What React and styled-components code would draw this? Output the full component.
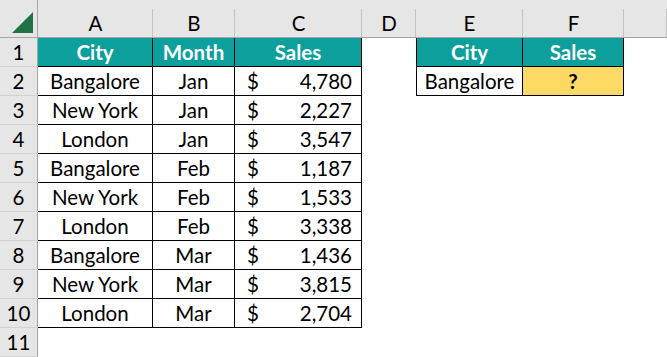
import React from 'react';
import styled, { createGlobalStyle, css } from 'styled-components';

const GlobalStyle = createGlobalStyle`
  html, body {
    margin: 0;
    padding: 0;
    background: #ffffff;
  }
  body {
    font-family: 'Lato', 'Liberation Sans', sans-serif;
    overflow: hidden;
  }
`;

// Styled Components
const Sheet = styled.div`
  display: grid;
  grid-template-columns: 38px 115px 82px 127px 54px 107px 101px 1fr;
  grid-template-rows: 38px repeat(11, 29px);
  width: 667px;
  height: 357px;
  background: #ffffff;
  color: #000000;
  font-size: 20.5px;
`;

const Corner = styled.div`
  background: #e6e6e6;
  border-right: 1px solid #a6a6a6;
  border-bottom: 1px solid #a6a6a6;
  display: flex;
  align-items: flex-end;
  justify-content: flex-end;
  padding: 0 4px 4px 0;
  box-sizing: border-box;
`;

const ColHeader = styled.div`
  position: relative;
  background: #e6e6e6;
  border-bottom: 1px solid #a6a6a6;
  box-sizing: border-box;
  display: flex;
  align-items: center;
  justify-content: center;
  padding-top: 9px;

  &::after {
    content: '';
    position: absolute;
    top: 9px;
    bottom: 0;
    right: 0;
    width: 1px;
    background: #c4c4c4;
  }
`;

const RowHeader = styled.div`
  background: #e6e6e6;
  border-right: 1px solid #a6a6a6;
  border-bottom: 1px solid #d2d2d2;
  box-sizing: border-box;
  display: flex;
  align-items: center;
  justify-content: center;
`;

const Cell = styled.div`
  box-sizing: border-box;
  display: flex;
  align-items: center;
  justify-content: center;
  white-space: nowrap;
  padding-bottom: 1px;

  ${props => props.boxed && css`
    border-right: 1px solid #000000;
    border-bottom: 1px solid #000000;
  `}
  ${props => props.leftEdge && css`
    border-left: 1px solid #000000;
  `}
  ${props => props.variant === 'head' && css`
    background: #0d9f9c;
    color: #ffffff;
    font-weight: 700;
  `}
  ${props => props.variant === 'input' && css`
    background: #ffd966;
    font-weight: 700;
  `}
`;

const MoneyCell = styled(Cell)`
  justify-content: space-between;
  padding: 0 9px 1px 12px;
`;

// Data
const columns = ['A', 'B', 'C', 'D', 'E', 'F', ''];

const sales = [
  { city: 'Bangalore', month: 'Jan', amount: '4,780' },
  { city: 'New York', month: 'Jan', amount: '2,227' },
  { city: 'London', month: 'Jan', amount: '3,547' },
  { city: 'Bangalore', month: 'Feb', amount: '1,187' },
  { city: 'New York', month: 'Feb', amount: '1,533' },
  { city: 'London', month: 'Feb', amount: '3,338' },
  { city: 'Bangalore', month: 'Mar', amount: '1,436' },
  { city: 'New York', month: 'Mar', amount: '3,815' },
  { city: 'London', month: 'Mar', amount: '2,704' },
];

function SelectAll() {
  return (
    <svg width="21" height="21" viewBox="0 0 21 21">
      <polygon points="21,0 21,21 0,21" fill="#217346" />
    </svg>
  );
}

function LookupCells({ row }) {
  if (row === 1) {
    return (
      <>
        <Cell boxed leftEdge variant="head">City</Cell>
        <Cell boxed variant="head">Sales</Cell>
      </>
    );
  }
  if (row === 2) {
    return (
      <>
        <Cell boxed leftEdge>Bangalore</Cell>
        <Cell boxed variant="input">?</Cell>
      </>
    );
  }
  return (
    <>
      <Cell />
      <Cell />
    </>
  );
}

export default function App() {
  return (
    <>
      <GlobalStyle />
      <Sheet>
        <Corner>
          <SelectAll />
        </Corner>
        {columns.map((c, i) => (
          <ColHeader key={i}>{c}</ColHeader>
        ))}

        {/* Row 1: headers */}
        <RowHeader>1</RowHeader>
        <Cell boxed variant="head">City</Cell>
        <Cell boxed variant="head">Month</Cell>
        <Cell boxed variant="head">Sales</Cell>
        <Cell />
        <LookupCells row={1} />
        <Cell />

        {/* Rows 2-10: data */}
        {sales.map((s, i) => (
          <React.Fragment key={i}>
            <RowHeader>{i + 2}</RowHeader>
            <Cell boxed>{s.city}</Cell>
            <Cell boxed>{s.month}</Cell>
            <MoneyCell boxed>
              <span>$</span>
              <span>{s.amount}</span>
            </MoneyCell>
            <Cell />
            <LookupCells row={i + 2} />
            <Cell />
          </React.Fragment>
        ))}

        {/* Row 11: empty */}
        <RowHeader>11</RowHeader>
        {columns.map((c, i) => (
          <Cell key={i} />
        ))}
      </Sheet>
    </>
  );
}
